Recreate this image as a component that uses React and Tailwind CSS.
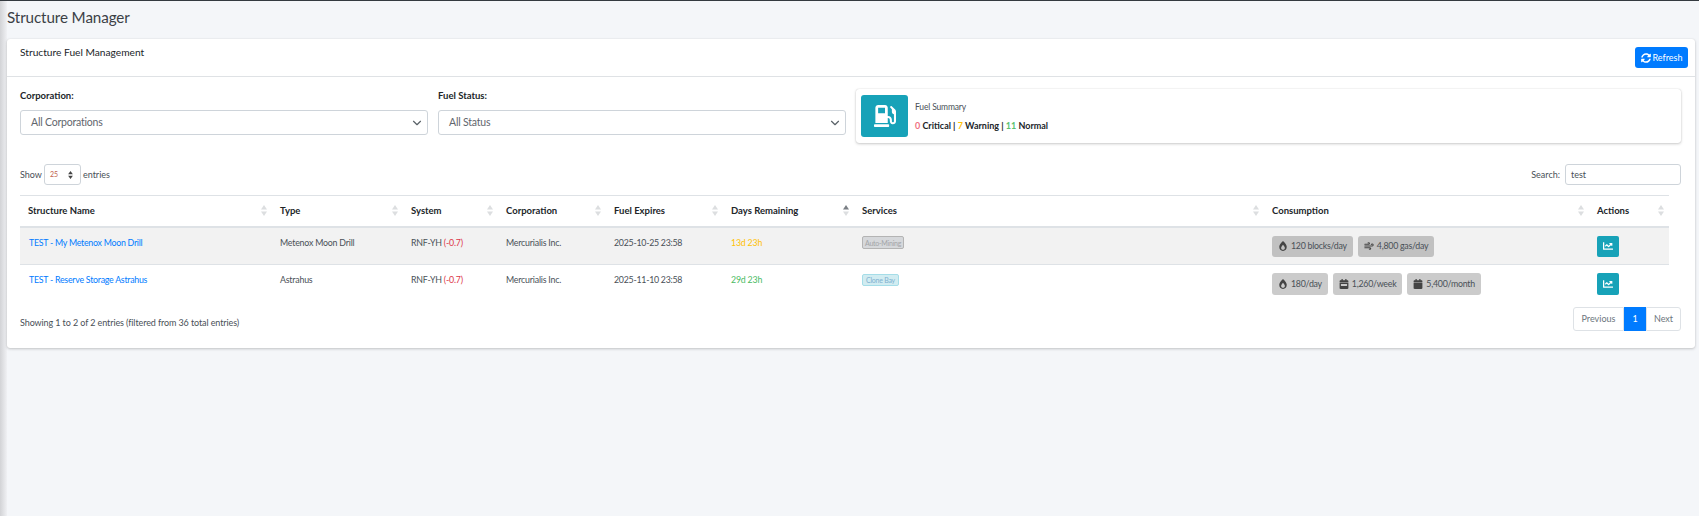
import React from "react";
import { FaSyncAlt, FaGasPump, FaBurn, FaCalendarWeek, FaCalendar, FaChartLine } from "react-icons/fa";
import { Wind, ChevronDown } from "lucide-react";

const columns = [
  { name: "Structure Name", width: "w-[252px]" },
  { name: "Type", width: "w-[131px]" },
  { name: "System", width: "w-[95px]" },
  { name: "Corporation", width: "w-[108px]" },
  { name: "Fuel Expires", width: "w-[117px]" },
  { name: "Days Remaining", width: "w-[131px]", active: true },
  { name: "Services", width: "w-[410px]", noSort: true },
  { name: "Consumption", width: "w-[325px]" },
  { name: "Actions", width: "w-[80px]" },
];

const rows = [
  {
    name: "TEST - My Metenox Moon Drill",
    type: "Metenox Moon Drill",
    expires: "2025-10-25 23:58",
    days: "13d 23h",
    daysClass: "text-[#ffc107]",
    service: "Auto-Mining",
    serviceClass: "border-[#b4b4b4] bg-[#d6d8db] text-[#a3a5a8] h-[13px] px-[2px]",
    rowClass: "bg-[#f2f2f2] h-[38px] border-b border-[#dee2e6]",
    pillClass: "bg-[#c1c1c1] h-[21px]",
    buttonClass: "h-[21px]",
    pills: [
      { icon: FaBurn, text: "120 blocks/day" },
      { icon: Wind, text: "4,800 gas/day", strokeWidth: 2.5 },
    ],
  },
  {
    name: "TEST - Reserve Storage Astrahus",
    type: "Astrahus",
    expires: "2025-11-10 23:58",
    days: "29d 23h",
    daysClass: "text-[#4cbb64]",
    service: "Clone Bay",
    serviceClass: "border-[#a5dde8] bg-[#d1ecf1] text-[#7fb0d0] h-[12px] px-[3px]",
    rowClass: "bg-white h-[39px]",
    pillClass: "bg-[#cbcbcb] h-[22px]",
    buttonClass: "h-[22px]",
    pills: [
      { icon: FaBurn, text: "180/day" },
      { icon: FaCalendarWeek, text: "1,260/week" },
      { icon: FaCalendar, text: "5,400/month" },
    ],
  },
];

function SortIcon({ active }) {
  return (
    <svg width="6" height="11" viewBox="0 0 6 11" className="shrink-0">
      <path d="M3 0 L6 4.5 L0 4.5 Z" fill={active ? "#7a7f85" : "#dcdee0"} />
      <path d="M3 11 L6 6.5 L0 6.5 Z" fill="#dcdee0" />
    </svg>
  );
}

function FilterSelect({ label, value }) {
  return (
    <div className="w-[408px] shrink-0">
      <div className="h-[20px] text-[9.5px] leading-[11px] font-bold text-[#212529]">{label}</div>
      <div className="flex h-[25px] items-center justify-between rounded-[3px] border border-[#ced4da] bg-white pl-[10px] pr-[3px] text-[10.5px] tracking-[-0.2px] text-[#5f666d]">
        <span>{value}</span>
        <ChevronDown size={14} strokeWidth={2} className="text-[#5a6268]" />
      </div>
    </div>
  );
}

export default function App() {
  return (
    <div className="flex min-h-[516px] bg-[#f4f6f9] font-['Lato','Liberation_Sans',sans-serif] text-[#212529]">
      <div className="w-[7px] shrink-0 bg-gradient-to-r from-[#d2d3d6] to-[#f0f1f4]" />
      <div className="w-[1688px] shrink-0">
        <div className="h-px bg-[#343a40] -ml-[7px] w-[1699px]" />
        <h1 className="h-[38px] pt-[5px] text-[15.2px] leading-[22px] tracking-[-0.1px] font-normal text-[#3b4046]">Structure Manager</h1>

        <div className="h-[309px] rounded-[3px] bg-white shadow-[0_0_1px_rgba(0,0,0,.125),0_1px_3px_rgba(0,0,0,.2)]">
          <div className="flex h-[38px] items-start justify-between border-b border-[#dfe2e5] pl-[13px] pr-[7px] pt-[7px]">
            <span className="text-[10.2px] leading-[13px] text-[#212529]">Structure Fuel Management</span>
            <button className="mt-px flex h-[21px] w-[53px] items-center justify-center gap-[2px] rounded-[3px] bg-[#007bff] text-[9px] text-white">
              <FaSyncAlt className="text-[10px]" />
              Refresh
            </button>
          </div>

          <div className="pl-[13px] pr-[14px] pt-[13px]">
            <div className="flex gap-[10px]">
              <FilterSelect label="Corporation:" value="All Corporations" />
              <FilterSelect label="Fuel Status:" value="All Status" />
              <div className="-mt-[1px] flex h-[54px] w-[825px] items-center gap-[7px] rounded-[3px] bg-white pl-[5px] shadow-[0_0_1px_rgba(0,0,0,.2),0_1px_3px_rgba(0,0,0,.2)]">
                <div className="flex h-[42px] w-[47px] items-center justify-center rounded-[3px] bg-[#17a2b8] text-[22px] text-white">
                  <FaGasPump />
                </div>
                <div>
                  <div className="mt-px text-[8.5px] leading-[13px] tracking-[-0.15px] text-[#495057]">Fuel Summary</div>
                  <div className="mt-[5px] text-[9px] leading-[13px] font-bold">
                    <span className="text-[#f0727f]">0</span> Critical | <span className="text-[#ffc107]">7</span> Warning | <span className="text-[#5cc16f]">11</span> Normal
                  </div>
                </div>
              </div>
            </div>

            <div className="mt-[21px] flex h-[21px] items-center justify-between text-[9px] text-[#495057]">
              <div className="flex items-center gap-[2px]">
                <span>Show</span>
                <div className="flex h-[21px] w-[37px] items-center justify-between rounded-[3px] border border-[#ced4da] pl-[5px] pr-[7px] text-[7px] text-[#c0604a]">
                  <span>25</span>
                  <svg width="5" height="8" viewBox="0 0 6 10">
                    <path d="M3 0 L6 4 L0 4 Z M3 10 L6 6 L0 6 Z" fill="#444" />
                  </svg>
                </div>
                <span>entries</span>
              </div>
              <div className="flex items-center gap-[5px]">
                <span>Search:</span>
                <div className="flex h-[21px] w-[116px] items-center rounded-[3px] border border-[#ced4da] pl-[5px] text-[#495057]">test</div>
              </div>
            </div>

            <table className="mt-[10px] w-[1649px] table-fixed border-collapse text-[8.8px] tracking-[-0.2px]">
              <colgroup>
                {columns.map((col) => (
                  <col key={col.name} className={col.width} />
                ))}
              </colgroup>
              <thead>
                <tr className="h-[31px] border-t border-b-[2px] border-t-[#dee2e6] border-b-[#dee2e6]">
                  {columns.map((col) => (
                    <th key={col.name} className="pl-[8px] pr-[5px] text-left text-[9.5px] tracking-normal font-bold text-[#212529]">
                      <div className="flex items-center justify-between">
                        <span>{col.name}</span>
                        <SortIcon active={col.active} />
                      </div>
                    </th>
                  ))}
                </tr>
              </thead>
              <tbody>
                {rows.map((row) => (
                  <tr key={row.name} className={`${row.rowClass} align-top`}>
                    <td className="pl-[9px] pt-[8px] tracking-[-0.25px] text-[#007bff]">{row.name}</td>
                    <td className="pl-[8px] pt-[8px] text-[#495057]">{row.type}</td>
                    <td className="pl-[8px] pt-[8px] text-[#495057]">
                      RNF-YH <span className="text-[#dc3545]">(-0.7)</span>
                    </td>
                    <td className="pl-[8px] pt-[8px] text-[#495057]">Mercurialis Inc.</td>
                    <td className="pl-[8px] pt-[8px] tracking-[-0.25px] text-[#495057]">{row.expires}</td>
                    <td className={`pl-[8px] pt-[8px] ${row.daysClass}`}>{row.days}</td>
                    <td className="pl-[8px] pt-[8px]">
                      <span className={`inline-flex items-center rounded-[2px] border text-[7px] tracking-[-0.25px] ${row.serviceClass}`}>
                        {row.service}
                      </span>
                    </td>
                    <td className="pl-[8px] pt-[8px]">
                      <div className="flex gap-[5px]">
                        {row.pills.map((pill) => (
                          <span key={pill.text} className={`flex items-center gap-[3px] rounded-[3px] px-[6px] tracking-[-0.25px] text-[#495057] ${row.pillClass}`}>
                            <pill.icon size={10} strokeWidth={pill.strokeWidth} className="text-[#444]" />
                            {pill.text}
                          </span>
                        ))}
                      </div>
                    </td>
                    <td className="pl-[8px] pt-[8px]">
                      <div className={`flex w-[22px] items-center justify-center rounded-[2px] bg-[#17a2b8] text-[10px] text-white ${row.buttonClass}`}>
                        <FaChartLine />
                      </div>
                    </td>
                  </tr>
                ))}
              </tbody>
            </table>

            <div className="mt-[3px] flex items-start justify-between">
              <span className="pt-[9px] text-[9px] tracking-[-0.1px] text-[#495057]">Showing 1 to 2 of 2 entries (filtered from 36 total entries)</span>
              <div className="flex h-[24px] items-stretch text-[9px]">
                <span className="flex w-[51px] items-center justify-center rounded-l-[3px] border border-[#dee2e6] text-[#6c757d]">Previous</span>
                <span className="flex w-[22px] items-center justify-center bg-[#007bff] text-white">1</span>
                <span className="flex w-[35px] items-center justify-center rounded-r-[3px] border border-[#dee2e6] text-[#6c757d]">Next</span>
              </div>
            </div>
          </div>
        </div>
      </div>
    </div>
  );
}
